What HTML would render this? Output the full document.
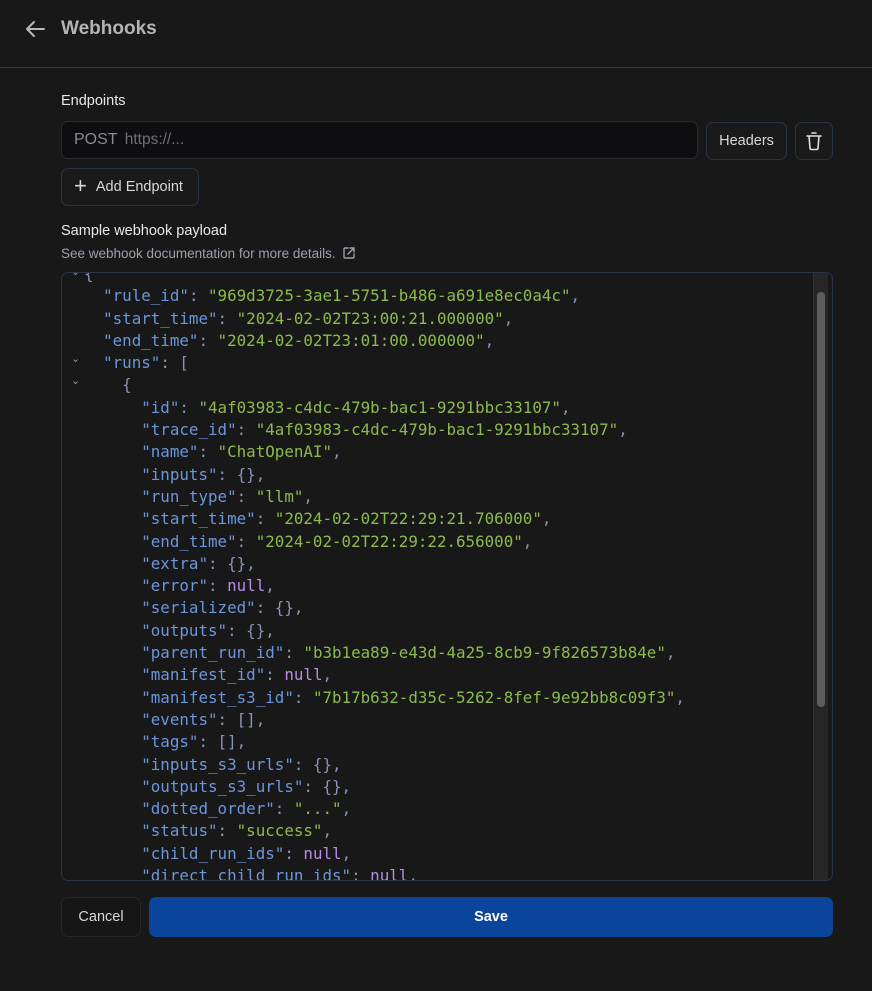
<!DOCTYPE html>
<html><head><style>
*{box-sizing:border-box;margin:0;padding:0}
body{width:872px;height:991px;background:#181818;font-family:"Liberation Sans",sans-serif;position:relative;overflow:hidden;color:#e4e4e4}
.a{position:absolute}
.btn{position:absolute;border:1px solid #2b3444;border-radius:7px;background:#1a1a1a;color:#d8d8d8;font-size:14.5px;display:flex;align-items:center;justify-content:center}
pre{font-family:"DejaVu Sans Mono","Liberation Mono",monospace;font-size:15.85px;line-height:22.3px;color:#8a93b4;white-space:pre}
.k{color:#6c96dc}.s{color:#8bbb4e}.n{color:#b58ee6}
.ch{position:absolute;color:#8a93b4;font-size:11px;font-family:"DejaVu Sans",sans-serif}
</style></head><body>
<svg class="a" style="left:24px;top:19px" width="22" height="20" viewBox="0 0 22 20"><path d="M20 10H3M10 3L3 10l7 7" fill="none" stroke="#b8b8b8" stroke-width="2" stroke-linecap="round" stroke-linejoin="round"/></svg>
<div class="a" style="left:61px;top:18px;font-size:19px;font-weight:bold;color:#b4b4b4">Webhooks</div>
<div class="a" style="left:0;top:67px;width:872px;height:1px;background:#3a3a3a"></div>
<div class="a" style="left:61px;top:93px;font-size:14.5px;color:#e8e8e8">Endpoints</div>
<div class="a" style="left:61px;top:121px;width:637px;height:38px;border:1px solid #252a33;border-radius:7px;background:#0e0e10"></div>
<div class="a" style="left:74px;top:131px;font-size:16px;color:#8a8a90">POST <span style="font-size:15.5px;color:#707078;margin-left:3px">https://...</span></div>
<div class="btn" style="left:706px;top:122px;width:81px;height:38px">Headers</div>
<div class="btn" style="left:795px;top:122px;width:38px;height:38px"><svg width="18" height="20" viewBox="0 0 18 20"><path d="M2 5h14M7 2h4M4 5l1 12c0 1 .5 1.5 1.5 1.5h5c1 0 1.5-.5 1.5-1.5l1-12" fill="none" stroke="#ddd" stroke-width="1.6" stroke-linecap="round" stroke-linejoin="round"/></svg></div>
<div class="btn" style="left:61px;top:168px;width:138px;height:38px;justify-content:flex-start;padding-left:12px"><span style="font-size:22px;font-weight:300;margin-right:9px;margin-top:-3px">+</span>Add Endpoint</div>
<div class="a" style="left:61px;top:223px;font-size:14.5px;color:#e8e8e8">Sample webhook payload</div>
<div class="a" style="left:61px;top:246px;font-size:13.5px;color:#9aa0ac">See webhook documentation for more details. <svg style="vertical-align:-2px;margin-left:3px" width="14" height="14" viewBox="0 0 14 14"><path d="M6 2H3a1 1 0 0 0-1 1v8a1 1 0 0 0 1 1h8a1 1 0 0 0 1-1V8M8 2h4v4M12 2L6 8" fill="none" stroke="#9aa0ac" stroke-width="1.4" stroke-linecap="round"/></svg></div>
<div class="a" style="left:61px;top:272px;width:772px;height:609px;border:1px solid #2b3444;border-radius:7px;overflow:hidden;background:#181818">
<pre class="a" style="left:22px;top:-10px">{
  <span class="k">"rule_id"</span>: <span class="s">"969d3725-3ae1-5751-b486-a691e8ec0a4c"</span>,
  <span class="k">"start_time"</span>: <span class="s">"2024-02-02T23:00:21.000000"</span>,
  <span class="k">"end_time"</span>: <span class="s">"2024-02-02T23:01:00.000000"</span>,
  <span class="k">"runs"</span>: [
    {
      <span class="k">"id"</span>: <span class="s">"4af03983-c4dc-479b-bac1-9291bbc33107"</span>,
      <span class="k">"trace_id"</span>: <span class="s">"4af03983-c4dc-479b-bac1-9291bbc33107"</span>,
      <span class="k">"name"</span>: <span class="s">"ChatOpenAI"</span>,
      <span class="k">"inputs"</span>: {},
      <span class="k">"run_type"</span>: <span class="s">"llm"</span>,
      <span class="k">"start_time"</span>: <span class="s">"2024-02-02T22:29:21.706000"</span>,
      <span class="k">"end_time"</span>: <span class="s">"2024-02-02T22:29:22.656000"</span>,
      <span class="k">"extra"</span>: {},
      <span class="k">"error"</span>: <span class="n">null</span>,
      <span class="k">"serialized"</span>: {},
      <span class="k">"outputs"</span>: {},
      <span class="k">"parent_run_id"</span>: <span class="s">"b3b1ea89-e43d-4a25-8cb9-9f826573b84e"</span>,
      <span class="k">"manifest_id"</span>: <span class="n">null</span>,
      <span class="k">"manifest_s3_id"</span>: <span class="s">"7b17b632-d35c-5262-8fef-9e92bb8c09f3"</span>,
      <span class="k">"events"</span>: [],
      <span class="k">"tags"</span>: [],
      <span class="k">"inputs_s3_urls"</span>: {},
      <span class="k">"outputs_s3_urls"</span>: {},
      <span class="k">"dotted_order"</span>: <span class="s">"..."</span>,
      <span class="k">"status"</span>: <span class="s">"success"</span>,
      <span class="k">"child_run_ids"</span>: <span class="n">null</span>,
      <span class="k">"direct_child_run_ids"</span>: <span class="n">null</span>,
</pre>
<div class="ch" style="left:9px;top:-8px">⌄</div>
<div class="ch" style="left:9px;top:79px">⌄</div>
<div class="ch" style="left:9px;top:101px">⌄</div>
<div class="a" style="left:751px;top:0;width:15px;height:609px;background:#262626;border-left:1px solid #303030"></div>
<div class="a" style="left:755px;top:19px;width:8px;height:415px;background:#5c5c5c;border-radius:4px"></div>
</div>
<div class="btn" style="left:61px;top:897px;width:80px;height:40px;border-color:#262626;background:#161616">Cancel</div>
<div class="a" style="left:149px;top:897px;width:684px;height:40px;background:#0a449b;border-radius:7px;color:#fff;font-size:14.5px;font-weight:bold;display:flex;align-items:center;justify-content:center">Save</div>
</body></html>
